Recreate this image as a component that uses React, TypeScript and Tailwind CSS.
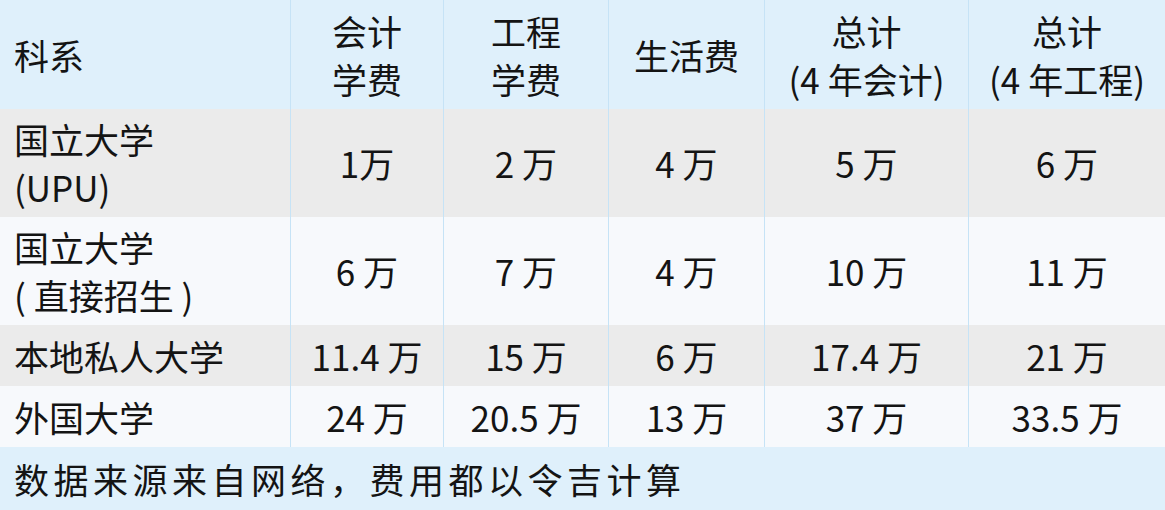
const rows = [
  { name: ["国立大学", "(UPU)"], vals: ["1万", "2 万", "4 万", "5 万", "6 万"], tall: true, bg: "bg-[#ebebeb]" },
  { name: ["国立大学", "( 直接招生 )"], vals: ["6 万", "7 万", "4 万", "10 万", "11 万"], tall: true, bg: "bg-[#f7f9fc]" },
  { name: ["本地私人大学"], vals: ["11.4 万", "15 万", "6 万", "17.4 万", "21 万"], tall: false, bg: "bg-[#ebebeb]" },
  { name: ["外国大学"], vals: ["24 万", "20.5 万", "13 万", "37 万", "33.5 万"], tall: false, bg: "bg-[#f7f9fc]" },
];

const headers = [["会计", "学费"], ["工程", "学费"], ["生活费"], ["总计", "(4 年会计)"], ["总计", "(4 年工程)"]];

const cols = "grid grid-cols-[290px_153px_165px_156px_204px_197px]";
const cell = "flex flex-col justify-center border-l border-[#c6e3f6] text-center";

export default function App() {
  return (
    <div
      className="w-[1165px] h-[510px] overflow-hidden bg-[#dff0fb] text-[35px] leading-[48px] text-[#141414]"
      style={{ fontFamily: '"Noto Sans CJK SC", "Noto Sans", sans-serif' }}
    >
      {/* header */}
      <div className={`${cols} h-[109px] bg-[#dff0fb]`}>
        <div className="flex items-center pl-[14px]">科系</div>
        {headers.map((h, i) => (
          <div key={i} className={cell}>
            {h.map((l) => (
              <div key={l}>{l}</div>
            ))}
          </div>
        ))}
      </div>

      {rows.map((r, i) => (
        <div key={i} className={`${cols} ${r.tall ? "h-[108px]" : "h-[61px]"} ${r.bg}`}>
          <div className="flex flex-col justify-center pl-[14px]">
            {r.name.map((l) => (
              <div key={l}>{l}</div>
            ))}
          </div>
          {r.vals.map((v, j) => (
            <div key={j} className={cell}>
              {v}
            </div>
          ))}
        </div>
      ))}

      {/* footer note */}
      <div className="flex h-[64px] items-center pl-[14px] tracking-[4.5px] bg-[#dff0fb]">
        数据来源来自网络，费用都以令吉计算
      </div>
    </div>
  );
}
